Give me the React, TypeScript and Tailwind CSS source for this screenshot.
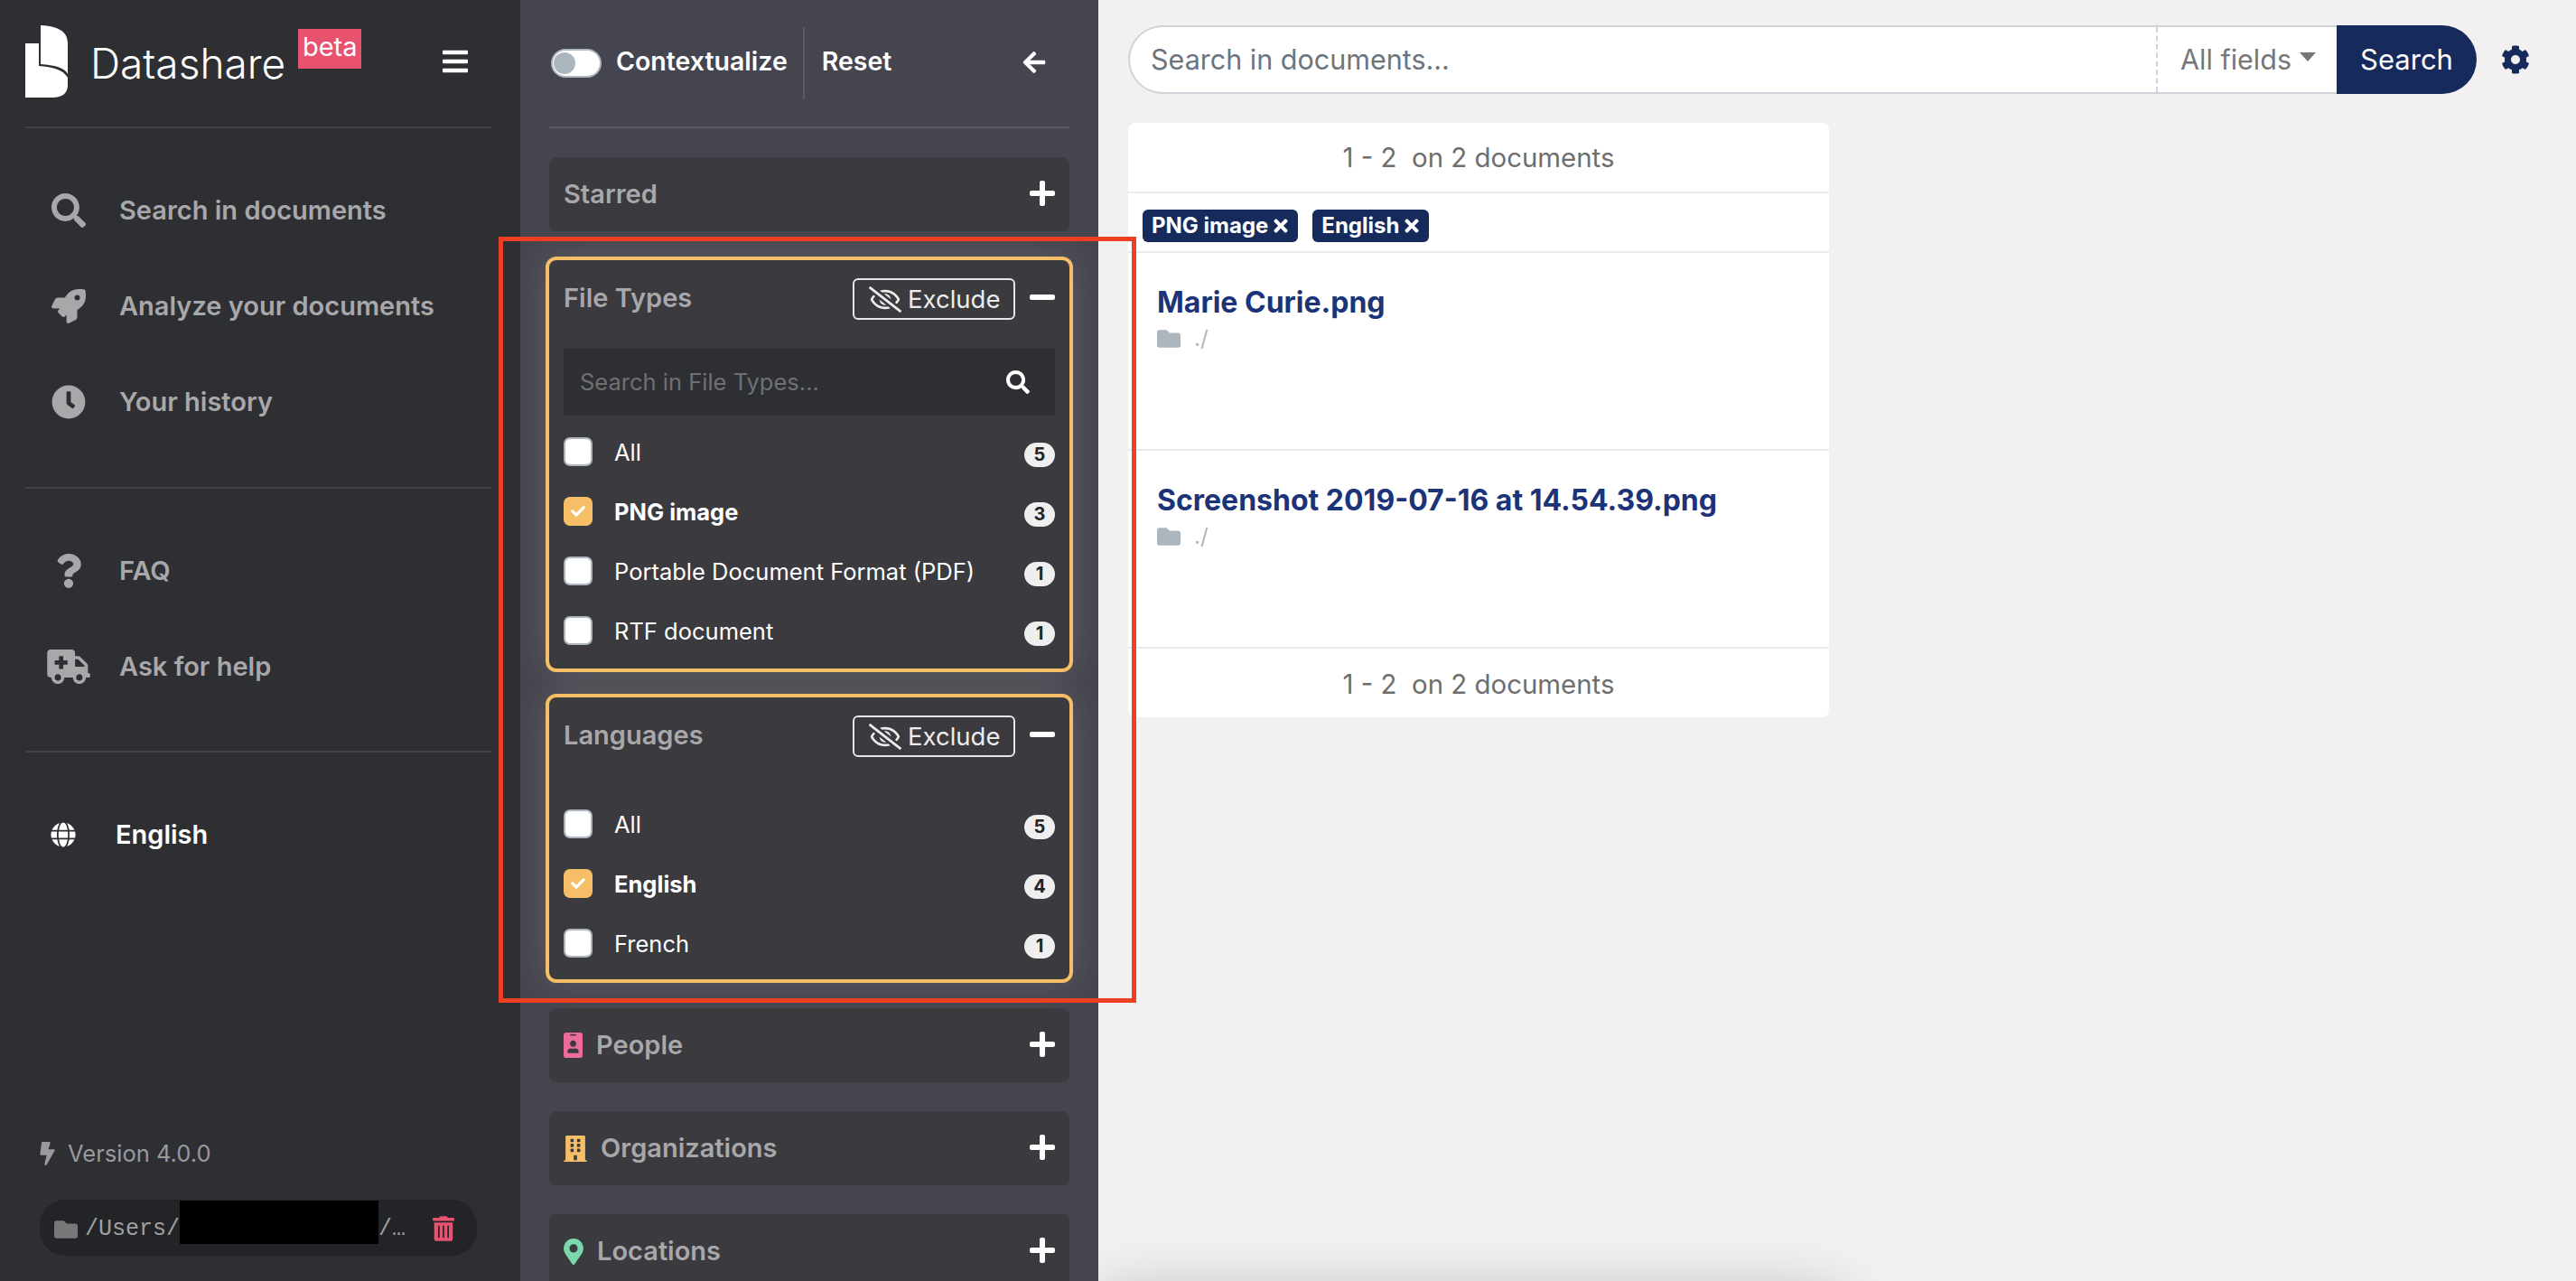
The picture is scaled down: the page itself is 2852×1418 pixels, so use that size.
import type { ReactNode } from 'react'
import {
  FaAmbulance,
  FaArrowLeft,
  FaBars,
  FaBolt,
  FaBuilding,
  FaCheck,
  FaClock,
  FaCog,
  FaFolder,
  FaGlobe,
  FaIdBadge,
  FaMapMarkerAlt,
  FaMinus,
  FaPlus,
  FaQuestion,
  FaRegEyeSlash,
  FaRocket,
  FaSearch,
  FaTimes,
  FaTrashAlt,
} from 'react-icons/fa'

function Logo() {
  return (
    <svg viewBox="0 0 47 80" className="w-[47px] h-[80px] shrink-0" fill="#ffffff">
      <path d="M17 0C35 1 47 6 47 20L47 54C44 47 32 44 17 43Z" />
      <path d="M0 20L15 20L15 45C30 46 42 49 47 58L47 66C47 75 41 80 30 80L0 80Z" />
    </svg>
  )
}

function NavItem({ icon, label }: { icon: ReactNode; label: string }) {
  return (
    <div className="flex items-center h-[106px] ml-[18px] text-[#a8a8ab]">
      <div className="w-[60px] flex justify-center">{icon}</div>
      <span className="ml-[26px] text-[29px] font-semibold">{label}</span>
    </div>
  )
}

function Sidebar() {
  return (
    <aside className="w-[576px] shrink-0 h-full bg-[#2e2f33] flex flex-col pl-[28px] pr-[32px]">
      <div className="h-[140px] flex pt-[28px] relative">
        <Logo />
        <span className="ml-[25px] mt-[15px] text-[46px] leading-[54px] font-light text-white">Datashare</span>
        <span className="ml-[14px] mt-[4px] h-[44px] w-[70px] bg-[#e8526f] text-white text-[29px] leading-[40px] text-center">
          beta
        </span>
        <FaBars className="ml-auto mr-[26px] mt-[24px] w-[28px] h-[32px] text-white" />
      </div>
      <div className="h-[2px] bg-[#414248]" />
      <div className="mt-[38px]">
        <NavItem icon={<FaSearch className="w-[38px] h-[38px]" />} label="Search in documents" />
        <NavItem icon={<FaRocket className="w-[38px] h-[38px]" />} label="Analyze your documents" />
        <NavItem icon={<FaClock className="w-[38px] h-[38px]" />} label="Your history" />
      </div>
      <div className="mt-[41px] h-[2px] bg-[#414248]" />
      <div className="mt-[38px]">
        <NavItem icon={<FaQuestion className="w-[38px] h-[38px]" />} label="FAQ" />
        <NavItem icon={<FaAmbulance className="w-[48px] h-[38px]" />} label="Ask for help" />
      </div>
      <div className="mt-[40px] h-[2px] bg-[#414248]" />
      <div className="mt-[38px] h-[106px] flex items-center text-white">
        <FaGlobe className="ml-[28px] w-[28px] h-[28px]" />
        <span className="ml-[44px] text-[29px] font-semibold">English</span>
      </div>
      <div className="mt-auto mb-[28px] ml-[16px] mr-[16px]">
        <div className="flex items-center text-[#9a9a9d]">
          <FaBolt className="w-[17px] h-[26px]" />
          <span className="ml-[14px] text-[25.5px]">Version 4.0.0</span>
        </div>
        <div className="mt-[32px] h-[62px] rounded-[28px] bg-[#232427] flex items-start pl-[16px] text-[#a0a0a2]">
          <FaFolder className="mt-[20px] w-[26px] h-[26px] text-[#77787a]" />
          <span className="ml-[8px] mt-[18px] text-[25px] leading-[30px] font-['Liberation_Mono',monospace]">/Users/</span>
          <span className="mt-[1px] w-[220px] h-[48px] bg-black" />
          <span className="mt-[18px] text-[25px] leading-[30px] font-['Liberation_Mono',monospace]">/…</span>
          <FaTrashAlt className="ml-[30px] mt-[18px] w-[24px] h-[28px] text-[#e8526f]" />
        </div>
      </div>
    </aside>
  )
}

function Collapsed({ icon, label, mt }: { icon?: ReactNode; label: string; mt: string }) {
  return (
    <div className={`${mt} h-[82px] shrink-0 rounded-[8px] bg-[#3a3a3f] flex items-center px-[16px]`}>
      {icon}
      <span className="text-[29px] font-semibold text-[#a8a8ab]">{label}</span>
      <FaPlus className="ml-auto mb-[2px] w-[28px] h-[32px] text-white" />
    </div>
  )
}

function ExpandedHeader({ title }: { title: string }) {
  return (
    <div className="flex items-center h-[46px] mt-[20px]">
      <span className="mb-[3px] text-[29px] font-semibold text-[#a8a8ab]">{title}</span>
      <button className="ml-auto w-[180px] h-[46px] rounded-[6px] border-2 border-[#e6e6e6] flex items-center pl-[16px] text-[#ececec]">
        <FaRegEyeSlash className="w-[36px] h-[29px]" />
        <span className="ml-[7px] mt-[1px] text-[27.5px]">Exclude</span>
      </button>
      <FaMinus className="ml-[16px] mb-[5px] w-[28px] h-[32px] text-white" />
    </div>
  )
}

function Row({ label, count, checked }: { label: string; count: number; checked?: boolean }) {
  return (
    <div className="h-[66px] flex items-center">
      {checked ? (
        <span className="w-[32px] h-[32px] rounded-[7px] bg-[#f6bf67] flex items-center justify-center">
          <FaCheck className="w-[16px] h-[16px] text-white" />
        </span>
      ) : (
        <span className="w-[32px] h-[32px] rounded-[7px] bg-white border-2 border-[#adb5bd]" />
      )}
      <span className={`ml-[24px] mt-[3px] text-[25.5px] text-white ${checked ? 'font-bold' : ''}`}>{label}</span>
      <span className="ml-auto mt-[7px] min-w-[34px] px-[10px] h-[27px] rounded-full bg-[#efefef] text-[#212529] text-[20px] leading-[27px] font-bold text-center">
        {count}
      </span>
    </div>
  )
}

function FilterPanel() {
  return (
    <section className="w-[640px] shrink-0 h-full overflow-hidden bg-[#45454f] px-[32px] flex flex-col">
      <div className="h-[140px] shrink-0 flex items-center">
        <span className="ml-[2px] w-[56px] h-[32px] rounded-full bg-white border-2 border-[#adb5bd] flex items-center pl-[1px]">
          <span className="w-[24px] h-[24px] rounded-full bg-[#adb5bd]" />
        </span>
        <span className="ml-[16px] mb-[3px] text-[28.5px] font-semibold text-white">Contextualize</span>
        <span className="ml-[17px] w-[2px] h-[80px] bg-[#5a5a62]" />
        <span className="ml-[19px] mb-[3px] text-[28.5px] font-semibold text-white">Reset</span>
        <FaArrowLeft className="ml-auto mr-[26px] mb-[3px] w-[26px] h-[28px] text-white" />
      </div>
      <div className="h-[2px] shrink-0 bg-[#5a5a62]" />
      <Collapsed label="Starred" mt="mt-[32px]" />
      <div className="mt-[28px] -mx-[4px] shrink-0 rounded-[12px] border-4 border-[#f6bf67] bg-[#3a3a3f] px-[16px] pb-[9px] shadow-[0_0_40px_rgba(255,240,220,0.14)]">
        <ExpandedHeader title="File Types" />
        <div className="mt-[32px] h-[74px] bg-[#2e2f33] flex items-center pl-[18px] pr-[28px]">
          <span className="text-[25.5px] text-[#6f7074]">Search in File Types...</span>
          <FaSearch className="ml-auto w-[26px] h-[26px] text-white" />
        </div>
        <div className="mt-[7px]">
          <Row label="All" count={5} />
          <Row label="PNG image" count={3} checked />
          <Row label="Portable Document Format (PDF)" count={1} />
          <Row label="RTF document" count={1} />
        </div>
      </div>
      <div className="mt-[24px] -mx-[4px] shrink-0 rounded-[12px] border-4 border-[#f6bf67] bg-[#3a3a3f] px-[16px] pb-[7px] shadow-[0_0_40px_rgba(255,240,220,0.14)]">
        <ExpandedHeader title="Languages" />
        <div className="mt-[41px]">
          <Row label="All" count={5} />
          <Row label="English" count={4} checked />
          <Row label="French" count={1} />
        </div>
      </div>
      <Collapsed mt="mt-[28px]" label="People" icon={<FaIdBadge className="mr-[15px] w-[21px] h-[28px] text-[#ec6a9c]" />} />
      <Collapsed mt="mt-[32px]" label="Organizations" icon={<FaBuilding className="mr-[15px] w-[26px] h-[29px] text-[#f6bf67]" />} />
      <Collapsed mt="mt-[32px]" label="Locations" icon={<FaMapMarkerAlt className="mr-[15px] w-[22px] h-[29px] text-[#7ad8ad]" />} />
    </section>
  )
}

function Chip({ label }: { label: string }) {
  return (
    <span className="h-[36px] rounded-[6px] bg-[#172a5c] text-white text-[24px] font-bold flex items-center px-[10px]">
      {label}
      <FaTimes className="ml-[5px] w-[18px] h-[22px]" />
    </span>
  )
}

function ResultRow({ name }: { name: string }) {
  return (
    <div className="h-[219px] border-b-2 border-[#e9ecef] px-[32px] pt-[34px]">
      <div className="text-[32px] leading-[42px] font-bold text-[#1b3378]">{name}</div>
      <div className="mt-[1px] flex items-center text-[#adb5bd]">
        <FaFolder className="w-[26px] h-[26px]" />
        <span className="ml-[15px] text-[24px]">./</span>
      </div>
    </div>
  )
}

function Main() {
  return (
    <main className="relative flex-1 h-full overflow-hidden bg-[#f2f0f1] pl-[33px] pt-[28px]">
      <div className="flex items-center">
        <div className="w-[1338px] h-[76px] flex items-center bg-white border-2 border-r-0 border-[#ced4da] rounded-l-[38px]">
          <span className="ml-[23px] text-[30.5px] text-[#6c757d]">Search in documents...</span>
          <div className="ml-auto h-full w-[200px] border-l-2 border-dashed border-[#ced4da] flex items-center pl-[25px] text-[#777777]">
            <span className="text-[30.5px]">All fields</span>
            <span className="ml-[9px] mb-[6px] border-x-[9px] border-x-transparent border-t-[10px] border-t-[#777777]" />
          </div>
        </div>
        <button className="w-[155px] h-[76px] rounded-r-[38px] bg-[#172a5c] text-white text-[31px]">Search</button>
        <FaCog className="ml-[27px] w-[32px] h-[32px] text-[#172a5c]" />
      </div>
      <div className="mt-[32px] w-[776px] rounded-[8px] bg-white">
        <div className="h-[78px] pt-[2px] border-b-2 border-[#e9ecef] flex items-center justify-center text-[29.4px] text-[#6e6e6e] whitespace-pre">
          1 - 2  on 2 documents
        </div>
        <div className="h-[66px] border-b-2 border-[#e9ecef] flex items-start gap-[16px] pl-[16px] pt-[18px]">
          <Chip label="PNG image" />
          <Chip label="English" />
        </div>
        <ResultRow name="Marie Curie.png" />
        <ResultRow name="Screenshot 2019-07-16 at 14.54.39.png" />
        <div className="h-[76px] pt-[4px] flex items-center justify-center text-[29.4px] text-[#6e6e6e] whitespace-pre">
          1 - 2  on 2 documents
        </div>
      </div>
      <div className="absolute left-0 top-[1440px] w-[820px] h-[80px] shadow-[0_0_70px_rgba(0,0,0,0.3)]" />
    </main>
  )
}

export default function App() {
  return (
    <div className="relative w-[2852px] h-[1418px] overflow-hidden flex font-['Inter',sans-serif]">
      <Sidebar />
      <FilterPanel />
      <Main />
      <div className="absolute left-[552px] top-[262px] w-[706px] h-[848px] border-[5px] border-[#ec3f24]" />
    </div>
  )
}
